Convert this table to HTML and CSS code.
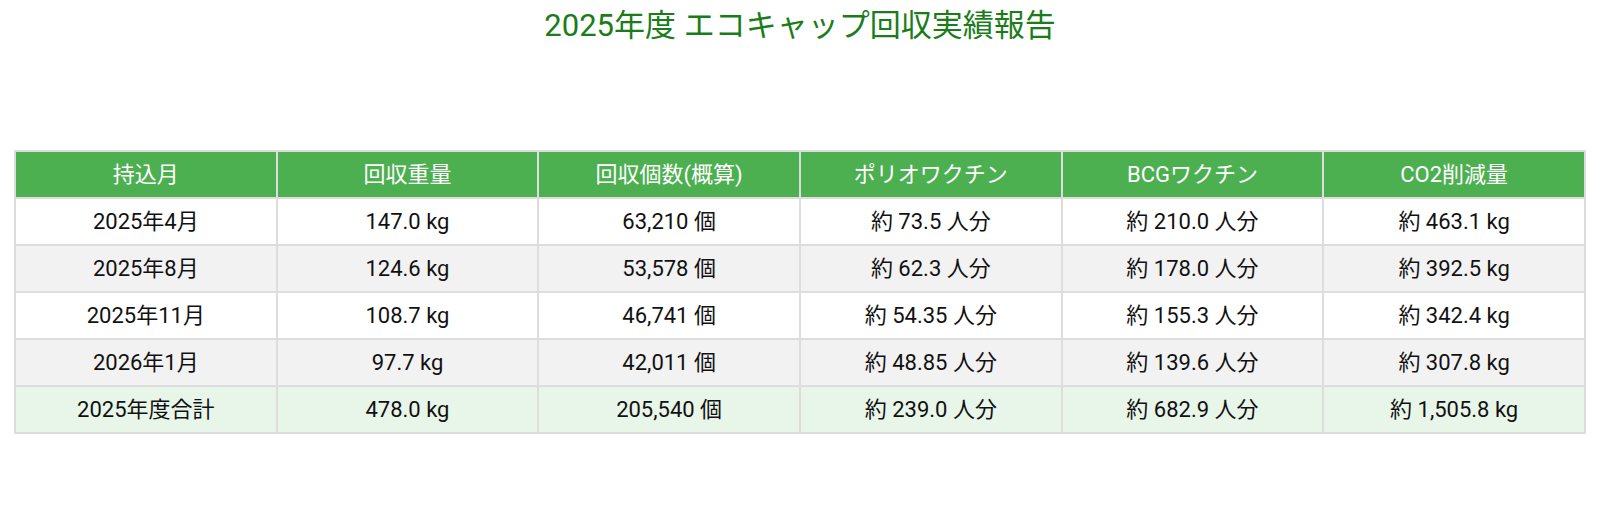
FILE: index.html
```html
<!DOCTYPE html>
<html lang="ja">
<head>
<meta charset="utf-8">
<title>2025年度 エコキャップ回収実績報告</title>
<link rel="stylesheet" href="styles.css">
</head>
<body>
<div class="page">
  <h1 class="title">2025年度 エコキャップ回収実績報告</h1>
  <table class="report">
    <thead>
      <tr>
        <th>持込月</th>
        <th>回収重量</th>
        <th>回収個数(概算)</th>
        <th>ポリオワクチン</th>
        <th>BCGワクチン</th>
        <th>CO2削減量</th>
      </tr>
    </thead>
    <tbody>
      <tr>
        <td>2025年4月</td><td>147.0 kg</td><td>63,210 個</td><td>約 73.5 人分</td><td>約 210.0 人分</td><td>約 463.1 kg</td>
      </tr>
      <tr class="alt">
        <td>2025年8月</td><td>124.6 kg</td><td>53,578 個</td><td>約 62.3 人分</td><td>約 178.0 人分</td><td>約 392.5 kg</td>
      </tr>
      <tr>
        <td>2025年11月</td><td>108.7 kg</td><td>46,741 個</td><td>約 54.35 人分</td><td>約 155.3 人分</td><td>約 342.4 kg</td>
      </tr>
      <tr class="alt">
        <td>2026年1月</td><td>97.7 kg</td><td>42,011 個</td><td>約 48.85 人分</td><td>約 139.6 人分</td><td>約 307.8 kg</td>
      </tr>
      <tr class="total">
        <td>2025年度合計</td><td>478.0 kg</td><td>205,540 個</td><td>約 239.0 人分</td><td>約 682.9 人分</td><td>約 1,505.8 kg</td>
      </tr>
    </tbody>
  </table>
</div>
</body>
</html>
```
FILE: styles.css
```css
html, body {
  margin: 0;
  padding: 0;
  background: #ffffff;
}
body {
  font-family: "Roboto", "Noto Sans CJK JP", sans-serif;
  color: #111;
}
.page {
  padding: 8px 14px 0 14px;
}
.title {
  margin: 0;
  text-align: center;
  font-size: 31px;
  line-height: 36px;
  font-weight: 400;
  color: #1a7d1a;
}
.report {
  margin-top: 106px;
  width: 100%;
  border-collapse: collapse;
  table-layout: fixed;
  border: 2px solid #dddddd;
}
.report th,
.report td {
  border: 2px solid #dddddd;
  padding: 8px 6px;
  line-height: 29px;
  font-size: 22px;
  text-align: center;
  font-weight: 400;
}
.report th {
  background: #4caf50;
  color: #ffffff;
}
.report tr.alt td {
  background: #f2f2f2;
}
.report tr.total td {
  background: #e8f5e9;
}
```
